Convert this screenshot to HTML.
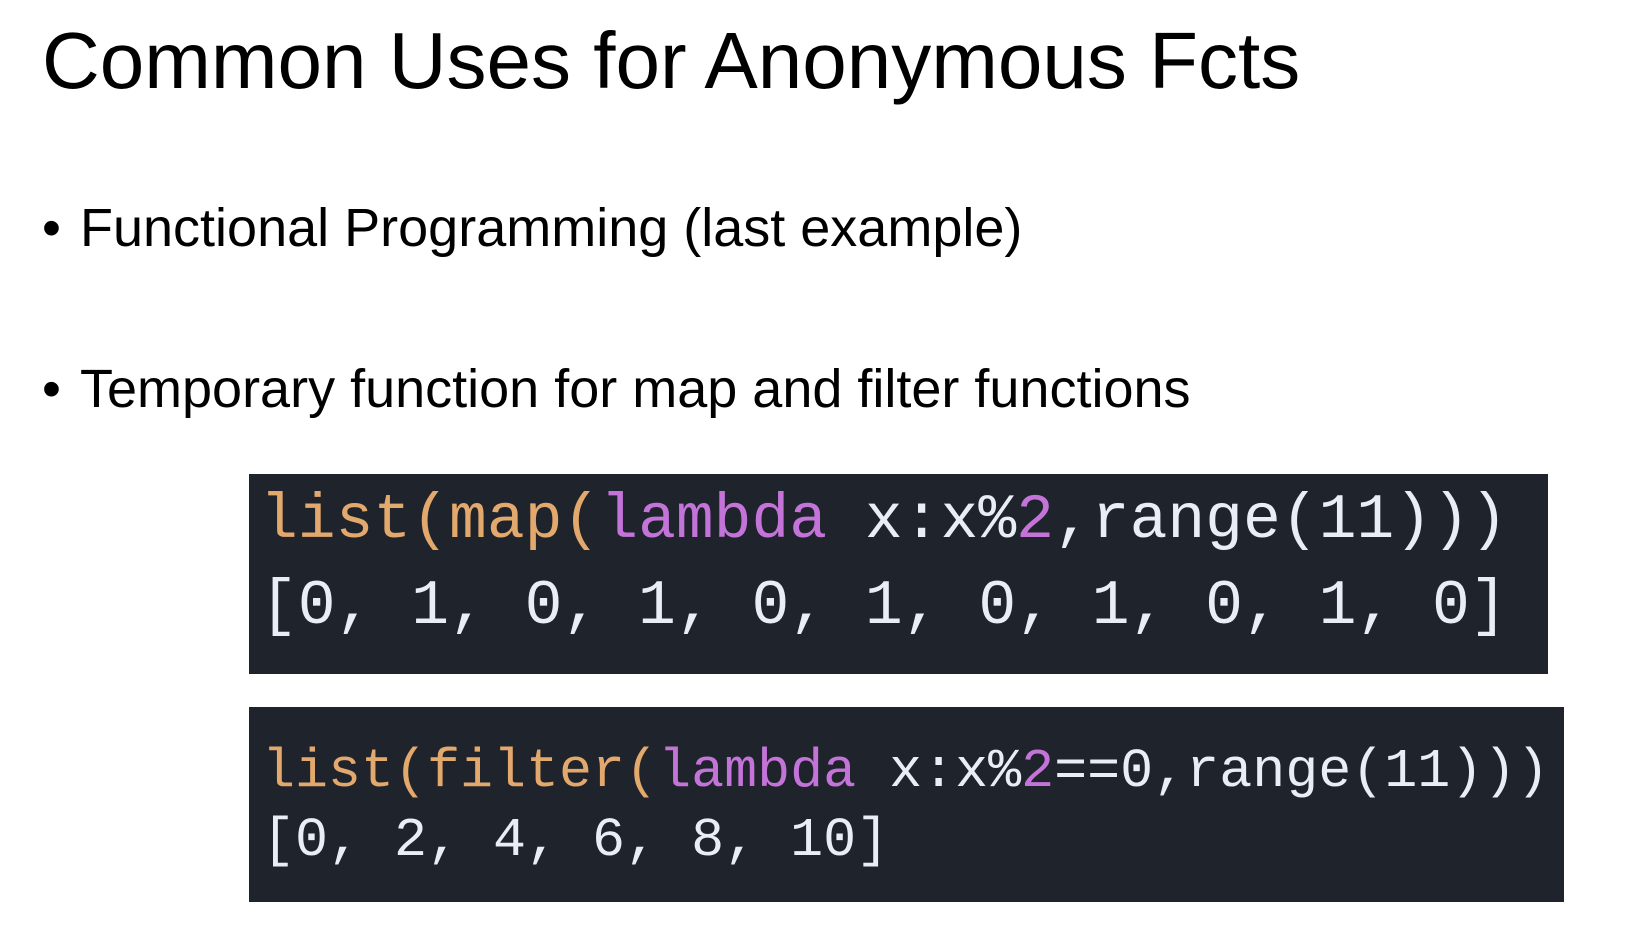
<!DOCTYPE html>
<html><head><meta charset="utf-8"><style>
body{margin:0;width:1644px;height:931px;background:#fff;position:relative;overflow:hidden;font-family:"Liberation Sans",sans-serif;color:#000}
.t{position:absolute;left:42px;top:21px;font-size:80px;line-height:1;white-space:nowrap;letter-spacing:0px}
.b{position:absolute;left:42px;font-size:54px;line-height:1;white-space:nowrap}
.b span{display:inline-block;width:38px}
.box{position:absolute;background:#1e232c}
.c{position:absolute;font-family:"Liberation Mono",monospace;white-space:pre;color:#e9eef4;line-height:1}
.o{color:#e3a86c}.p{color:#c474d8}
</style></head><body>
<div class="t">Common Uses for Anonymous Fcts</div>
<div class="b" style="top:201px"><span>•</span>Functional Programming (last example)</div>
<div class="b" style="top:362px"><span>•</span>Temporary function for map and filter functions</div>
<div class="box" style="left:249px;top:474px;width:1299px;height:200px"></div>
<div class="c" style="left:260px;top:489px;font-size:63px"><span class="o">list(map(</span><span class="p">lambda</span> x:x%<span class="p">2</span>,range(11)))</div>
<div class="c" style="left:260px;top:575px;font-size:63px">[0, 1, 0, 1, 0, 1, 0, 1, 0, 1, 0]</div>
<div class="box" style="left:249px;top:707px;width:1315px;height:195px"></div>
<div class="c" style="left:262px;top:744px;font-size:55px"><span class="o">list(filter(</span><span class="p">lambda</span> x:x%<span class="p">2</span>==0,range(11)))</div>
<div class="c" style="left:262px;top:813px;font-size:55px">[0, 2, 4, 6, 8, 10]</div>
</body></html>
